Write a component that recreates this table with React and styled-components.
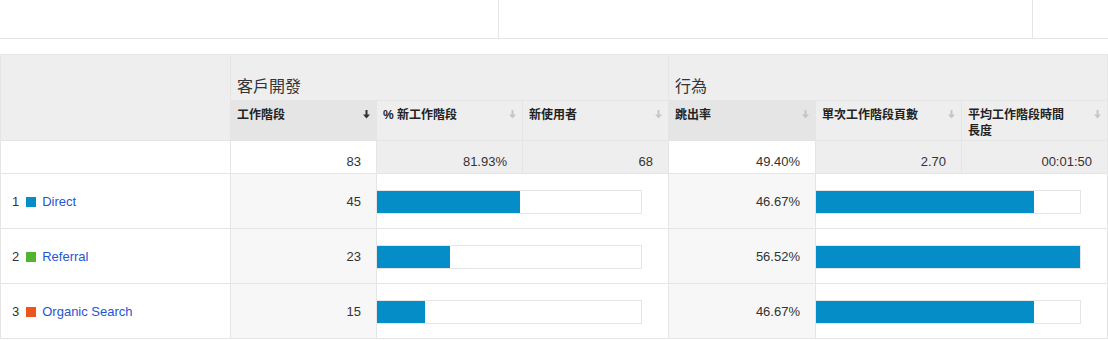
import React from "react";
import styled, { createGlobalStyle } from "styled-components";

const GlobalStyle = createGlobalStyle`
  body {
    margin: 0;
    background: #fff;
    font-family: "Liberation Sans", Arial, "Noto Sans CJK TC", sans-serif;
    color: #333;
  }
`;

const rows = [
  { id: 1, name: "Direct", color: "#058dc7", sessions: 45, bounce: 46.67 },
  { id: 2, name: "Referral", color: "#50b432", sessions: 23, bounce: 56.52 },
  { id: 3, name: "Organic Search", color: "#ed561b", sessions: 15, bounce: 46.67 },
];

const totalSessions = 83;
const maxBounce = Math.max(...rows.map((r) => r.bounce));

function SortArrow({ active }) {
  return (
    <Arrow width="7" height="9" viewBox="0 0 7 9" $active={active}>
      <path d="M2.5 0h2v5h-2z M0 4.5h7L3.5 8.5z" fill="currentColor" />
    </Arrow>
  );
}

function HeadCell({ label, sorted, dark }) {
  return (
    <ColHead $dark={dark}>
      <HeadInner>
        <HeadLabel>{label}</HeadLabel>
        <SortArrow active={sorted} />
      </HeadInner>
    </ColHead>
  );
}

function App() {
  return (
    <Page>
      <GlobalStyle />
      <TopStrip>
        <TopCell $w={499} />
        <TopCell $w={534} />
        <TopCell />
      </TopStrip>

      <Table>
        <colgroup>
          <col style={{ width: 230 }} />
          <col style={{ width: 146 }} />
          <col style={{ width: 146 }} />
          <col style={{ width: 146 }} />
          <col style={{ width: 147 }} />
          <col style={{ width: 146 }} />
          <col style={{ width: 146 }} />
        </colgroup>
        <thead>
          <tr>
            <GroupHead rowSpan={2} />
            <GroupHead colSpan={3}>客戶開發</GroupHead>
            <GroupHead colSpan={3}>行為</GroupHead>
          </tr>
          <tr>
            <HeadCell label="工作階段" sorted dark />
            <HeadCell label="% 新工作階段" />
            <HeadCell label="新使用者" />
            <HeadCell label="跳出率" dark />
            <HeadCell label="單次工作階段頁數" />
            <HeadCell label="平均工作階段時間長度" />
          </tr>
        </thead>
        <tbody>
          <tr>
            <TotalCell $white />
            <TotalCell $white>83</TotalCell>
            <TotalCell>81.93%</TotalCell>
            <TotalCell>68</TotalCell>
            <TotalCell $white>49.40%</TotalCell>
            <TotalCell>2.70</TotalCell>
            <TotalCell>00:01:50</TotalCell>
          </tr>
          {rows.map((r) => (
            <tr key={r.id}>
              <SourceCell>
                <SourceInner>
                  <RowNum>{r.id}</RowNum>
                  <Swatch $color={r.color} />
                  <SourceLink href="#">{r.name}</SourceLink>
                </SourceInner>
              </SourceCell>
              <ValueCell>{r.sessions}</ValueCell>
              <BarCell colSpan={2}>
                <Track>
                  <Fill style={{ width: `${(r.sessions / totalSessions) * 100}%` }} />
                </Track>
              </BarCell>
              <ValueCell>{r.bounce.toFixed(2)}%</ValueCell>
              <BarCell colSpan={2}>
                <Track>
                  <Fill style={{ width: `${(r.bounce / maxBounce) * 100}%` }} />
                </Track>
              </BarCell>
            </tr>
          ))}
        </tbody>
      </Table>
    </Page>
  );
}

const Page = styled.div`
  width: 1108px;
`;

const TopStrip = styled.div`
  display: flex;
  height: 38px;
  border-bottom: 1px solid #e5e5e5;
  margin-bottom: 15px;
`;

const TopCell = styled.div`
  width: ${(p) => (p.$w ? `${p.$w}px` : "auto")};
  flex: ${(p) => (p.$w ? "none" : "1")};
  border-right: ${(p) => (p.$w ? "1px solid #e5e5e5" : "none")};
  box-sizing: border-box;
`;

const Table = styled.table`
  width: 1108px;
  table-layout: fixed;
  border-collapse: collapse;
  font-size: 13px;

  td,
  th {
    border: 1px solid #e5e5e5;
    box-sizing: border-box;
  }
`;

const GroupHead = styled.th`
  background: #eeeeee;
  height: 46px;
  padding: 0 6px 4px;
  vertical-align: bottom;
  text-align: left;
  font-size: 16px;
  font-weight: normal;
  color: #333;
  line-height: 18px;
`;

const ColHead = styled.th`
  background: ${(p) => (p.$dark ? "#e5e5e5" : "#eeeeee")};
  height: 40px;
  padding: 6px 6px 0 6px;
  vertical-align: top;
  text-align: left;
  font-size: 12px;
  font-weight: bold;
  color: #222;
  line-height: 16px;
`;

const HeadInner = styled.div`
  display: flex;
  align-items: flex-start;
  gap: 20px;
`;

const HeadLabel = styled.span`
  flex: 1;
  min-width: 0;
`;

const Arrow = styled.svg`
  flex: none;
  margin-top: 3px;
  color: ${(p) => (p.$active ? "#333" : "#c6c6c6")};
`;

const TotalCell = styled.td`
  background: ${(p) => (p.$white ? "#fff" : "#eeeeee")};
  height: 33px;
  padding: 0 15px 4px 6px;
  vertical-align: bottom;
  text-align: right;
  line-height: 15px;
  color: #333;
`;

const SourceCell = styled.td`
  height: 55px;
  padding: 0 0 0 11px;
  vertical-align: middle;
  background: #fff;
`;

const SourceInner = styled.div`
  display: flex;
  align-items: center;
`;

const RowNum = styled.span`
  color: #333;
  margin-right: 7px;
`;

const Swatch = styled.span`
  width: 10px;
  height: 10px;
  background: ${(p) => p.$color};
  margin: 2px 6px 0 0;
  flex: none;
`;

const SourceLink = styled.a`
  color: #1f55d6;
  text-decoration: none;
`;

const ValueCell = styled.td`
  background: #f7f7f7;
  padding: 0 15px 0 6px;
  vertical-align: middle;
  text-align: right;
  color: #333;
`;

const BarCell = styled.td`
  background: #fff;
  padding: 0 26px 0 0;
  vertical-align: middle;
`;

const Track = styled.div`
  height: 24px;
  box-sizing: border-box;
  border: 1px solid #e5e5e5;
  border-left: none;
  margin-top: 1px;
`;

const Fill = styled.div`
  height: 22px;
  background: #058dc7;
`;

export default App;
